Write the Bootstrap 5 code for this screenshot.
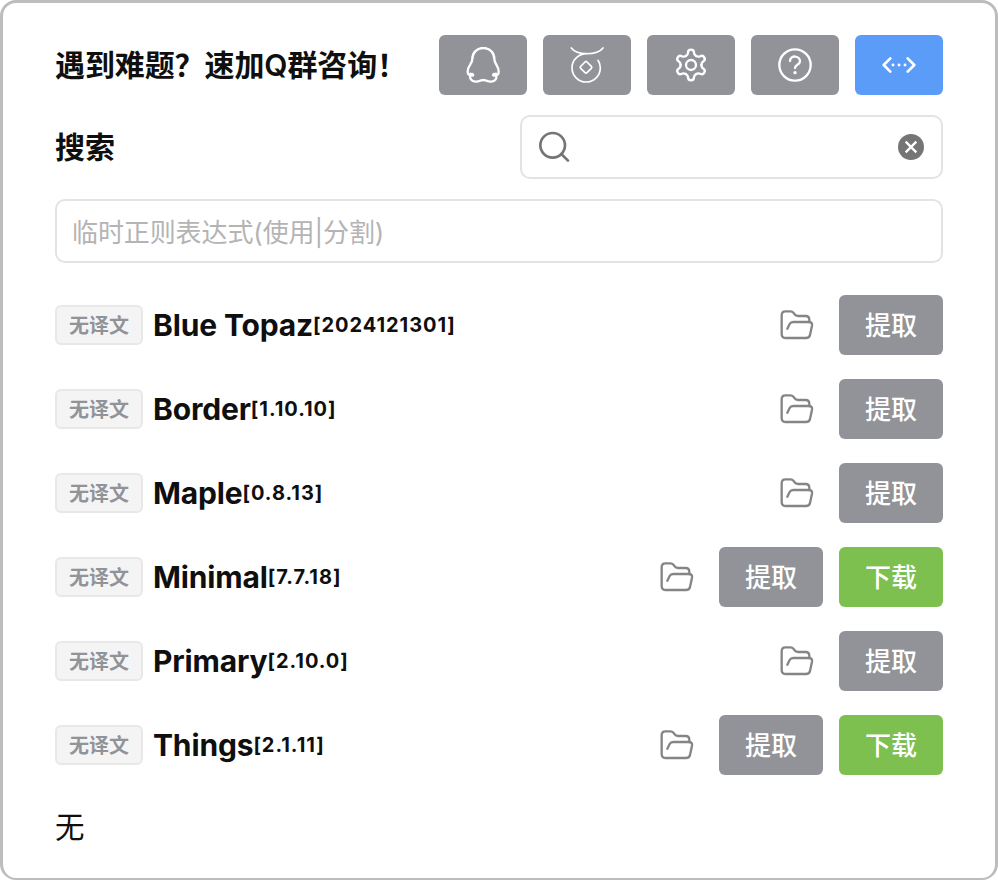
<!DOCTYPE html>
<html lang="zh-CN">
<head>
<meta charset="utf-8">
<meta name="viewport" content="width=device-width, initial-scale=1">
<title>主题译文</title>
<link href="https://cdn.jsdelivr.net/npm/bootstrap@5.3.0/dist/css/bootstrap.min.css" rel="stylesheet">
<style>
  body { font-family: Inter, "Noto Sans CJK SC", sans-serif; color: #0f0f0f; background: #fff; overflow: hidden; }
  .panel { height: 880px; border: solid #bdbdbd; border-width: 3px 3px 2px; border-radius: 16px; padding: 32px 52px 0; }
  .panel svg { fill: none; stroke: currentColor; stroke-linecap: round; stroke-linejoin: round; display: block; flex: none; }
  .headline { font-size: 30px; font-weight: 600; line-height: 60px; white-space: nowrap; letter-spacing: -.1px; }
  .tool-btn, .act-btn { height: 60px; border: 0; border-radius: 6px; color: #fff; background: #929398; padding: 0; }
  .tool-btn { width: 88px; }
  .act-btn { width: 104px; font-size: 26px; font-weight: 500; line-height: 58px; padding-top: 2px; }
  .is-blue { background: #5b9cf8; }
  .is-green { background: #7dc050; }
  .block-gap { margin-top: 20px; }
  .field { height: 64px; border: 2px solid #e3e3e3; border-radius: 10px; padding: 0 16px; }
  .search-field { width: 423px; color: #757575; padding-left: 16.5px; }
  .field input { font-size: 26px; color: #0f0f0f; min-width: 0; letter-spacing: -.1px; }
  .field input::placeholder { color: #b4b4b4; opacity: 1; }
  .regex-field { padding: 2px 15px 0; }
  .tag { width: 88px; height: 40px; border: 2px solid #e8e8e9; border-radius: 6px; background: #f4f4f4; color: #929398; font-size: 20px; font-weight: 700; line-height: 38px; text-align: center; margin-right: 10px; }
  .theme-list { gap: 24px; margin-top: 32px; }
  .theme-row { height: 60px; }
  .theme-name { font-size: 30px; font-weight: 700; line-height: 60px; letter-spacing: -.15px; }
  .theme-ver { font-size: 20px; font-weight: 700; line-height: 60px; letter-spacing: .95px; }
  .folder { color: #858585; margin-right: 25px; }
  .empty-note { font-size: 29.5px; line-height: 44px; margin-top: 30px; }
</style>
</head>
<body>
<svg width="0" height="0" class="position-absolute">
  <symbol id="folder" viewBox="0 0 102 90">
    <path stroke-width="7" d="M16 84Q5 84 5 72V16Q5 4 16 4H31Q37 4 41 9Q46 18 54 18H77Q88 18 88 30V37M22 56L29 42Q32 36 40 36H87Q98 36 96 47L90 75Q88 84 78 84H16"/>
  </symbol>
</svg>
<main class="panel">
  <header class="d-flex justify-content-between align-items-center">
    <div class="headline">遇到难题&#xFF1F;速加Q群咨询&#xFF01;</div>
    <div class="d-flex gap-3">
      <button class="btn tool-btn d-flex align-items-center justify-content-center" aria-label="QQ">
        <svg width="36" height="36" viewBox="0 0 108 108" stroke-width="7"><path d="M55 3C34 3 22 19 22 36C22 52 8 54 8 74C8 84 12 86 22 81C14 86 14 92 18 97C23 105 39 106 49 100Q55 98 61 100C71 106 87 105 92 97C96 92 94 86 86 81C98 86 101 84 101 74C101 54 88 52 88 36C88 19 76 3 55 3Z"/><path stroke-width="10" d="M17 82L23 84M92 82L86 84"/></svg>
      </button>
      <button class="btn tool-btn d-flex align-items-center justify-content-center" aria-label="赞助">
        <svg width="36" height="36" viewBox="0 0 108 108" stroke-width="5"><path d="M7 3C24 26 84 26 102 3M54 20C28 20 9 39 9 62C9 86 28 105 51 105C75 105 94 86 94 62Q94 50 87 40"/><path d="M48 45Q51 42 54 45L67 58Q70 61 67 64L54 77Q51 80 48 77L35 64Q32 61 35 58Z"/></svg>
      </button>
      <button class="btn tool-btn d-flex align-items-center justify-content-center" aria-label="设置">
        <svg width="36" height="36" viewBox="-54 -54 108 108" stroke-width="7">
          <circle r="15"/>
          <path id="tooth" d="M-15.5-27C-10.5-30-9-32-9-37C-9-43-5-46 0-46C5-46 9-43 9-37C9-32 10.5-30 15.5-27"/>
          <use href="#tooth" transform="rotate(60)"/><use href="#tooth" transform="rotate(120)"/><use href="#tooth" transform="rotate(180)"/><use href="#tooth" transform="rotate(240)"/><use href="#tooth" transform="rotate(300)"/>
        </svg>
      </button>
      <button class="btn tool-btn d-flex align-items-center justify-content-center" aria-label="帮助">
        <svg width="36" height="36" viewBox="-54 -54 108 108" stroke-width="7"><circle r="47"/><path d="M-15-12C-15-30 15-30 15-11C15 0 0-1 0 9"/><circle cx="0" cy="23" r="5" fill="currentColor" stroke="none"/></svg>
      </button>
      <button class="btn tool-btn is-blue d-flex align-items-center justify-content-center" aria-label="展开">
        <svg width="36" height="36" viewBox="-54 -54 108 108" stroke-width="8"><path d="M-26-20L-46 0L-26 20M26-20L46 0L26 20"/><path stroke-width="8.5" d="M-18 0h.1M0 0h.1M18 0h.1"/></svg>
      </button>
    </div>
  </header>

  <section class="block-gap d-flex justify-content-between align-items-center">
    <div class="headline">搜索</div>
    <div class="field search-field d-flex align-items-center">
      <svg width="32" height="32" viewBox="0 0 96 96" stroke-width="8"><circle cx="41" cy="43" r="37"/><path d="M67 69L87 89"/></svg>
      <input class="flex-grow-1 border-0 bg-transparent" type="text" aria-label="搜索">
      <svg width="28" height="28" viewBox="0 0 84 84"><circle cx="42" cy="42" r="39" fill="currentColor" stroke="none"/><path stroke="#fff" stroke-width="7" stroke-linecap="butt" d="M26 26L58 58M58 26L26 58"/></svg>
    </div>
  </section>

  <div class="field regex-field block-gap d-flex align-items-center">
    <input class="w-100 border-0 p-0 bg-transparent" type="text" placeholder="临时正则表达式(使用|分割)">
  </div>

  <section class="theme-list d-flex flex-column">
    <div class="theme-row d-flex align-items-center"><span class="tag">无译文</span><span class="theme-name">Blue Topaz</span><span class="theme-ver">[2024121301]</span><svg class="folder ms-auto" width="34" height="30"><use href="#folder"/></svg><button class="btn act-btn">提取</button></div>
    <div class="theme-row d-flex align-items-center"><span class="tag">无译文</span><span class="theme-name">Border</span><span class="theme-ver">[1.10.10]</span><svg class="folder ms-auto" width="34" height="30"><use href="#folder"/></svg><button class="btn act-btn">提取</button></div>
    <div class="theme-row d-flex align-items-center"><span class="tag">无译文</span><span class="theme-name">Maple</span><span class="theme-ver">[0.8.13]</span><svg class="folder ms-auto" width="34" height="30"><use href="#folder"/></svg><button class="btn act-btn">提取</button></div>
    <div class="theme-row d-flex align-items-center"><span class="tag">无译文</span><span class="theme-name">Minimal</span><span class="theme-ver">[7.7.18]</span><svg class="folder ms-auto" width="34" height="30"><use href="#folder"/></svg><button class="btn act-btn me-3">提取</button><button class="btn act-btn is-green">下载</button></div>
    <div class="theme-row d-flex align-items-center"><span class="tag">无译文</span><span class="theme-name">Primary</span><span class="theme-ver">[2.10.0]</span><svg class="folder ms-auto" width="34" height="30"><use href="#folder"/></svg><button class="btn act-btn">提取</button></div>
    <div class="theme-row d-flex align-items-center"><span class="tag">无译文</span><span class="theme-name">Things</span><span class="theme-ver">[2.1.11]</span><svg class="folder ms-auto" width="34" height="30"><use href="#folder"/></svg><button class="btn act-btn me-3">提取</button><button class="btn act-btn is-green">下载</button></div>
  </section>

  <div class="empty-note">无</div>
</main>
<script src="https://cdn.jsdelivr.net/npm/bootstrap@5.3.0/dist/js/bootstrap.bundle.min.js"></script>
</body>
</html>
